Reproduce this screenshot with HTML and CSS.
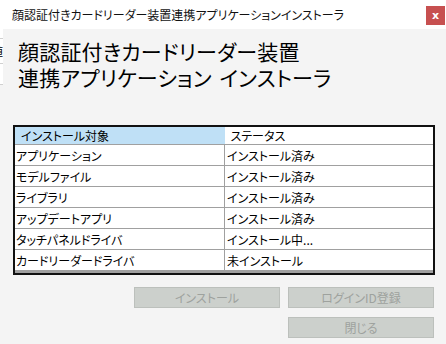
FILE: index.html
```html
<!DOCTYPE html>
<html lang="ja">
<head>
    <meta charset="UTF-8">
    <meta name="viewport" content="width=device-width, initial-scale=1.0">
    <title>顔認証付きカードリーダー装置連携アプリケーションインストーラ</title>
    <link rel="stylesheet" href="styles.css">
</head>
<body>
    <div class="titlebar">
        <span class="titlebar-text">顔認証付きカードリーダー装置連携アプリケーションインストーラ</span>
        <button class="close-btn" type="button">x</button>
    </div>

    <div class="window">
        <div class="edge">
            <div class="edge-sheet">
                <div class="edge-line"></div>
                <div class="edge-cell">値</div>
                <div class="edge-line"></div>
            </div>
        </div>

        <div class="installer">
            <h1>顔認証付きカードリーダー装置<br>連携アプリケーション インストーラ</h1>

            <table class="target-table">
                <thead>
                    <tr>
                        <th class="col-target">インストール対象</th>
                        <th class="col-status">ステータス</th>
                    </tr>
                </thead>
                <tbody>
                    <tr><td>アプリケーション</td><td>インストール済み</td></tr>
                    <tr><td>モデルファイル</td><td>インストール済み</td></tr>
                    <tr><td>ライブラリ</td><td>インストール済み</td></tr>
                    <tr><td>アップデートアプリ</td><td>インストール済み</td></tr>
                    <tr><td>タッチパネルドライバ</td><td>インストール中...</td></tr>
                    <tr><td>カードリーダードライバ</td><td>未インストール</td></tr>
                    <tr class="grid-end"><td></td><td></td></tr>
                </tbody>
            </table>

            <div class="actions">
                <button type="button" disabled>インストール</button>
                <button type="button" disabled>ログインID登録</button>
                <button type="button" class="close-action" disabled>閉じる</button>
            </div>
        </div>
    </div>
</body>
</html>
```

FILE: styles.css
```css
body {
    margin: 0;
    background-color: #f4f4f4;
    font-family: "Noto Sans CJK JP", sans-serif;
    font-feature-settings: "palt";
    color: #000;
    overflow: hidden;
}
.titlebar {
    height: 29px;
    background-color: #fff;
    display: flex;
    align-items: flex-start;
}
.titlebar-text {
    margin: 7px 0 0 12px;
    font-size: 12px;
    line-height: 16px;
    color: #111;
}
.close-btn {
    margin: 6px 1px 0 auto;
    width: 19px;
    height: 19px;
    padding: 0;
    border: none;
    background-color: #c75050;
    color: #fff;
    font-family: "DejaVu Sans", sans-serif;
    font-size: 11px;
    font-weight: bold;
    line-height: 17px;
}
.window {
    display: flex;
}
.edge {
    width: 3px;
    overflow: hidden;
}
.edge-sheet {
    height: 56px;
    background-color: #fff;
    padding-top: 9px;
    box-sizing: border-box;
    border-bottom: 1px solid #d0d0d0;
}
.edge-line {
    height: 1px;
    background-color: #d0d0d0;
}
.edge-cell {
    height: 24px;
    font-size: 11px;
    line-height: 24px;
    margin-left: -8px;
}
.installer {
    flex: 1;
    padding-left: 10px;
}
.installer h1 {
    margin: 9px 0 0 5px;
    font-size: 21px;
    line-height: 26px;
    font-weight: normal;
    letter-spacing: 0.2px;
    word-spacing: 3px;
}
.target-table {
    margin-top: 35px;
    width: 422px;
    border-collapse: collapse;
    border: 2px solid #111;
    font-size: 12px;
    background-color: #fff;
}
.target-table th,
.target-table td {
    padding: 0 0 0 1px;
    text-align: left;
    font-weight: normal;
    white-space: nowrap;
}
.target-table td {
    height: 20px;
    border: 1px solid #a0a0a0;
    border-left: none;
}
.target-table th {
    height: 17px;
    padding-left: 6px;
}
.target-table .col-target {
    width: 203px;
    background-color: #bfe0f6;
}
.target-table td:first-child {
    width: 208px;
}
.target-table td:last-child {
    padding-left: 2px;
}
.target-table .grid-end td {
    height: 2px;
    padding: 0;
    border: none;
    background-color: #a0a0a0;
}
.actions {
    display: grid;
    grid-template-columns: 146px 146px;
    justify-content: end;
    column-gap: 8px;
    row-gap: 9px;
    margin: 12px 12px 0 0;
}
.actions button {
    height: 21px;
    padding: 0;
    border: 1px solid #bcc0bc;
    background-color: #ccd0cc;
    color: #9ea29e;
    font-family: "Noto Sans CJK JP", sans-serif;
    font-feature-settings: "palt";
    font-size: 12px;
}
.actions .close-action {
    grid-column: 2;
}
```
